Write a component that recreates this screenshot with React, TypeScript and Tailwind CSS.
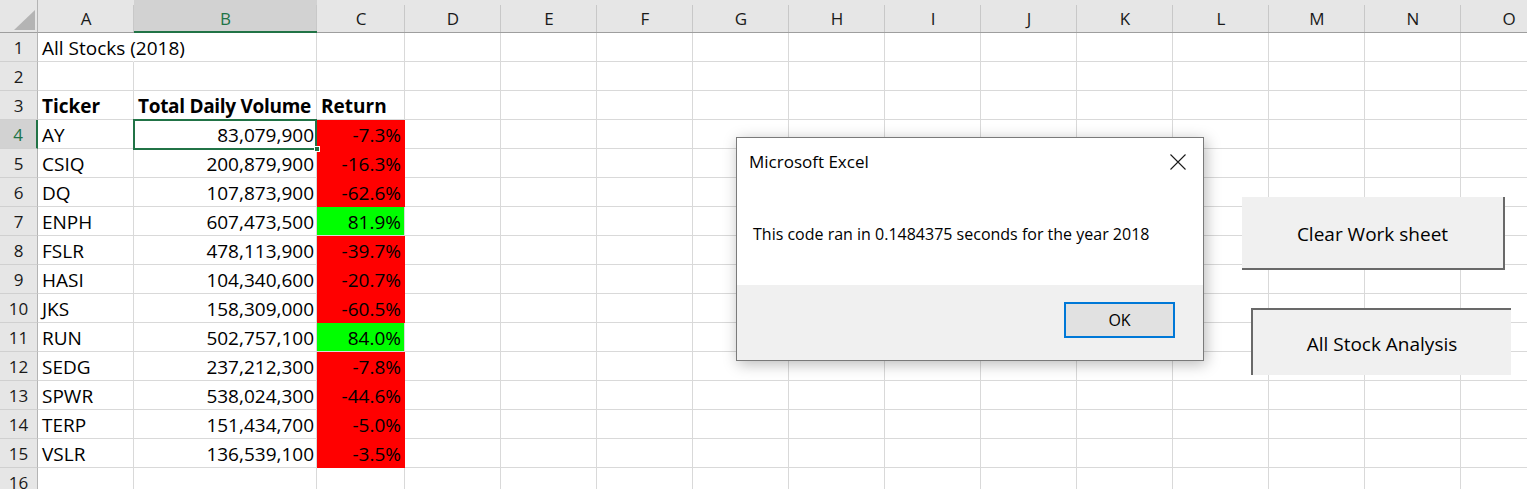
const COLS = ["A", "B", "C", "D", "E", "F", "G", "H", "I", "J", "K", "L", "M", "N", "O"];

type Stock = { ticker: string; volume: string; ret: string; up: boolean };

const STOCKS: Stock[] = [
  { ticker: "AY", volume: "83,079,900", ret: "-7.3%", up: false },
  { ticker: "CSIQ", volume: "200,879,900", ret: "-16.3%", up: false },
  { ticker: "DQ", volume: "107,873,900", ret: "-62.6%", up: false },
  { ticker: "ENPH", volume: "607,473,500", ret: "81.9%", up: true },
  { ticker: "FSLR", volume: "478,113,900", ret: "-39.7%", up: false },
  { ticker: "HASI", volume: "104,340,600", ret: "-20.7%", up: false },
  { ticker: "JKS", volume: "158,309,000", ret: "-60.5%", up: false },
  { ticker: "RUN", volume: "502,757,100", ret: "84.0%", up: true },
  { ticker: "SEDG", volume: "237,212,300", ret: "-7.8%", up: false },
  { ticker: "SPWR", volume: "538,024,300", ret: "-44.6%", up: false },
  { ticker: "TERP", volume: "151,434,700", ret: "-5.0%", up: false },
  { ticker: "VSLR", volume: "136,539,100", ret: "-3.5%", up: false },
];

function RowHead({ n, active }: { n: number; active?: boolean }) {
  return (
    <div
      className={
        "h-[29px] border-b border-[#d0d0d0] pt-px text-center text-[17px] leading-[28px] " +
        (active
          ? "border-r-2 border-r-[#217346] bg-[#d2d2d2] text-[#217346]"
          : "border-r border-r-[#b4b4b4] bg-[#e6e6e6] text-[#1a1a1a]")
      }
    >
      {n}
    </div>
  );
}

function Cell({ children, className = "" }: { children?: React.ReactNode; className?: string }) {
  return (
    <div
      className={
        "h-[29px] whitespace-nowrap border-b border-r border-[#d9d9d9] pt-[2px] text-[19px] leading-[27px] text-black " +
        className
      }
    >
      {children}
    </div>
  );
}

function Blanks({ from }: { from: number }) {
  return (
    <>
      {COLS.slice(from).map((c) => (
        <Cell key={c} />
      ))}
    </>
  );
}

export default function App() {
  return (
    <div className="relative h-[489px] w-[1527px] overflow-hidden bg-white font-['Open_Sans',sans-serif]">
      <div className="grid grid-cols-[38px_96px_183px_88px_repeat(12,96px)]">
        {/* column headers */}
        <div className="relative h-[33px] border-b border-r border-b-[#9e9e9e] border-r-[#b4b4b4] bg-[#e6e6e6]">
          <svg className="absolute left-[14px] top-[10px]" width="21" height="20" viewBox="0 0 21 20">
            <polygon points="21,0 21,20 0,20" fill="#b4b4b4" />
          </svg>
        </div>
        {COLS.map((c) => (
          <div
            key={c}
            className={
              "relative h-[33px] pt-[5px] text-center text-[17px] leading-[28px] after:absolute after:bottom-0 after:right-0 after:top-[5px] after:w-px after:bg-[#c8c8c8] " +
              (c === "B"
                ? "border-b-2 border-[#217346] bg-[#d2d2d2] text-[#217346]"
                : "border-b border-[#9e9e9e] bg-[#e6e6e6] text-[#1a1a1a]")
            }
          >
            {c}
          </div>
        ))}

        {/* row 1 */}
        <RowHead n={1} />
        <Cell className="border-r-transparent pl-[4px]">All Stocks (2018)</Cell>
        <Blanks from={1} />

        {/* row 2 */}
        <RowHead n={2} />
        <Blanks from={0} />

        {/* row 3 */}
        <RowHead n={3} />
        <Cell className="pl-[4px] font-bold">Ticker</Cell>
        <Cell className="pl-[4px] font-bold tracking-[-0.3px]">Total Daily Volume</Cell>
        <Cell className="pl-[4px] font-bold">Return</Cell>
        <Blanks from={3} />

        {STOCKS.map((s, i) => (
          <div key={s.ticker} className="contents">
            <RowHead n={i + 4} active={i === 0} />
            <Cell className="pl-[4px]">{s.ticker}</Cell>
            <Cell className="pr-[2px] text-right">{s.volume}</Cell>
            <Cell
              className={
                "pr-[3px] text-right " +
                (s.up ? "border-[#00ff00] bg-[#00ff00]" : "border-[#ff0000] bg-[#ff0000]")
              }
            >
              {s.ret}
            </Cell>
            <Blanks from={3} />
          </div>
        ))}

        {/* row 16 */}
        <RowHead n={16} />
        <Blanks from={0} />
      </div>

      {/* active cell B4 */}
      <div className="absolute left-[133px] top-[119px] h-[31px] w-[184px] border-2 border-[#217346]" />
      <div className="absolute left-[314px] top-[146px] h-[6px] w-[6px] border border-white bg-[#217346]" />

      {/* sheet buttons */}
      <button className="absolute left-[1242px] top-[197px] h-[73px] w-[263px] border-b-2 border-r-2 border-[#696969] bg-[#f0f0f0] pt-[3px] text-[19px] text-black">
        Clear Work sheet
      </button>
      <button className="absolute left-[1251px] top-[308px] h-[67px] w-[260px] border-l-2 border-t-2 border-[#696969] bg-[#f0f0f0] pt-[3px] text-[19px] text-black">
        All Stock Analysis
      </button>

      {/* message box */}
      <div className="absolute left-[736px] top-[137px] flex h-[224px] w-[468px] flex-col border border-[#7a7a7a] bg-white shadow-[2px_3px_14px_rgba(0,0,0,0.28)]">
        <div className="flex h-[48px] items-center justify-between pl-[12px] pr-[17px]">
          <span className="text-[17px] text-black">Microsoft Excel</span>
          <svg width="16" height="16" viewBox="0 0 16 16" className="text-[#1a1a1a]">
            <path d="M0.5 0.5 L15.5 15.5 M15.5 0.5 L0.5 15.5" stroke="currentColor" strokeWidth="1.1" />
          </svg>
        </div>
        <div className="flex flex-1 items-center pb-[4px] pl-[16px] text-[16px] text-black">
          This code ran in 0.1484375 seconds for the year 2018
        </div>
        <div className="flex h-[75px] justify-end bg-[#f0f0f0] pr-[28px] pt-[17px]">
          <button className="h-[36px] w-[111px] border-2 border-[#0078d7] bg-[#e1e1e1] text-[16px] text-black">
            OK
          </button>
        </div>
      </div>
    </div>
  );
}
